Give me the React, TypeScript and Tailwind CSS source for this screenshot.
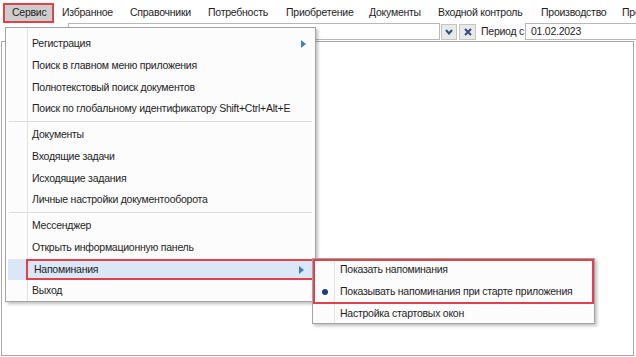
import React from "react";

const topMenu = [
	{ label: "Сервис", w: "w-[51px]" },
	{ label: "Избранное", w: "w-[68px]" },
	{ label: "Справочники", w: "w-[78px]" },
	{ label: "Потребность", w: "w-[78px]" },
	{ label: "Приобретение", w: "w-[83px]" },
	{ label: "Документы", w: "w-[69px]" },
	{ label: "Входной контроль", w: "w-[103px]" },
	{ label: "Производство", w: "w-[81px]" },
	{ label: "Прочее", w: "w-[60px]" },
];

type Entry = { label?: string; sep?: boolean; sub?: boolean; active?: boolean };

const menu: Entry[] = [
	{ label: "Регистрация", sub: true },
	{ label: "Поиск в главном меню приложения" },
	{ label: "Полнотекстовый поиск документов" },
	{ label: "Поиск по глобальному идентификатору Shift+Ctrl+Alt+E" },
	{ sep: true },
	{ label: "Документы" },
	{ label: "Входящие задачи" },
	{ label: "Исходящие задания" },
	{ label: "Личные настройки документооборота" },
	{ sep: true },
	{ label: "Мессенджер" },
	{ label: "Открыть информационную панель" },
	{ label: "Напоминания", sub: true, active: true },
	{ label: "Выход" },
];

function Arrow() {
	return (
		<svg width="5" height="8" viewBox="0 0 5 8" className="absolute right-[9px] top-[7px]">
			<path d="M0 0 L5 4 L0 8 Z" fill="#3f7fd0" />
		</svg>
	);
}

export default function App() {
	return (
		<div className="w-[636px] h-[357px] bg-white relative overflow-hidden font-['Liberation_Sans',sans-serif] text-[10.5px] tracking-[-0.25px] text-[#1e1e1e]">
			{/* menu bar */}
			<div className="h-[23px] flex pl-[3px] pt-[3px] overflow-hidden">
				{topMenu.map((m, i) => (
					<div
						key={m.label}
						className={`${m.w} shrink-0 h-[20px] flex items-center whitespace-nowrap ${
							i === 0
								? "bg-[#cdcdcd] border-2 border-[#e2404a] pl-[7px]"
								: "pl-[8px]"
						}`}
					>
						{m.label}
					</div>
				))}
			</div>

			{/* toolbar */}
			<div className="h-[18px] flex items-start">
				<div className="w-[68px] shrink-0" />
				<div className="w-[372px] h-[17px] border border-[#b8b8b8] bg-white shrink-0" />
				<div className="ml-[1px] mt-[1px] w-[16px] h-[16px] bg-[#e9e9e9] border border-[#c4c4c4] flex items-center justify-center shrink-0">
					<svg width="8" height="6" viewBox="0 0 8 6">
						<path d="M1 1 L4 4.5 L7 1" stroke="#2d4f82" strokeWidth="2" fill="none" />
					</svg>
				</div>
				<div className="ml-[2px] mt-[1px] w-[17px] h-[16px] bg-[#e9e9e9] border border-[#c4c4c4] flex items-center justify-center shrink-0">
					<svg width="8" height="8" viewBox="0 0 8 8">
						<path d="M1 1 L7 7 M7 1 L1 7" stroke="#2d4f82" strokeWidth="2" />
					</svg>
				</div>
				<div className="ml-[5px] h-[17px] flex items-center whitespace-nowrap shrink-0 w-[44px]">Период с</div>
				<div className="h-[17px] flex-1 border border-[#b8b8b8] border-r-0 flex items-center pl-[5px]">01.02.2023</div>
			</div>

			{/* content frame */}
			<div className="ml-[1px] w-[633px] h-[315px] border border-[#a8a8a8]" />

			{/* dropdown menu */}
			<div className="absolute left-[5px] top-[27px] w-[311px] h-[275px] bg-[#fcfcfc] border border-[#a4a4a4] shadow-[2px_2px_3px_rgba(0,0,0,0.25)] pt-[5px]">
				<div className="absolute left-[21px] top-0 bottom-0 w-px bg-[#e2e2e2]" />
				{menu.map((e, i) =>
					e.sep ? (
						<div key={i} className="h-[4px] px-[3px] pt-[1px]">
							<div className="h-px bg-[#dcdcdc]" />
							<div className="h-px bg-white" />
						</div>
					) : (
						<div
							key={i}
							className={`relative h-[21.75px] flex items-center pl-[26px] whitespace-nowrap ${
								e.active ? "bg-[#dae7f7] mx-[2px] pl-[24px]" : ""
							}`}
						>
							{e.label}
							{e.sub && <Arrow />}
							{e.active && (
								<div className="absolute left-[18px] -right-[2px] top-0 bottom-0 border-2 border-[#e2404a]" />
							)}
						</div>
					)
				)}
			</div>

			{/* submenu */}
			<div className="absolute left-[312px] top-[258px] w-[283px] h-[66px] bg-[#fcfcfc] border border-[#a4a4a4] shadow-[2px_2px_3px_rgba(0,0,0,0.25)] whitespace-nowrap">
				<div className="absolute left-[21px] top-0 bottom-0 w-px bg-[#e2e2e2]" />
				<div className="relative">
					<div className="h-[22px] flex items-center pl-[27px]">Показать напоминания</div>
					<div className="relative h-[22px] flex items-center pl-[27px]">
						<div className="absolute left-[9px] top-[8px] w-[6px] h-[6px] rounded-full bg-[#1f3f7a]" />
						Показывать напоминания при старте приложения
					</div>
					<div className="absolute left-0 right-0 top-0 h-[45px] border-2 border-[#e2404a]" />
				</div>
				<div className="h-[21px] flex items-center pl-[27px]">Настройка стартовых окон</div>
			</div>
		</div>
	);
}
